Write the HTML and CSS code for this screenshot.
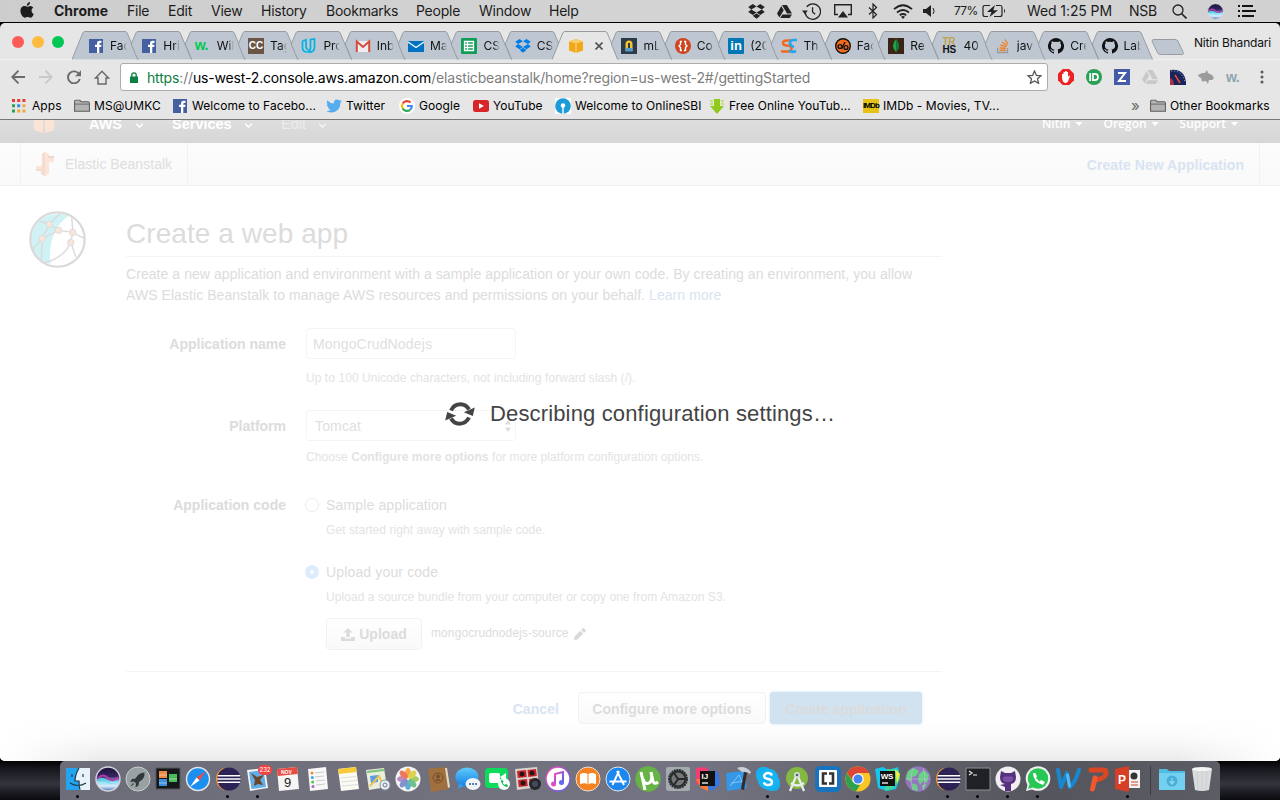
FILE: index.html
```html
<!DOCTYPE html>
<html lang="en">
<head>
<meta charset="utf-8">
<title>Elastic Beanstalk</title>
<link rel="stylesheet" href="styles.css">
</head>
<body>
<svg class="defs" aria-hidden="true">
  <defs>
    <symbol id="tab" viewBox="0 0 67 29"><path d="M12.7 28.5L6.3 13L11 1.8Q11.500.5 13 .5H53Q54.500.5 55.200 2L66.500 28.500Z" fill="#bec7d1"/><path d="M12.700 28.500L6.300 13L11 1.800Q11.500.5 13 .5H53Q54.500.5 55.200 2L66.500 28.500" fill="none" stroke="#979ca2"/></symbol>
    <symbol id="tab-full" viewBox="0 0 67 29"><path d="M0 28.500L10.800 2Q11.500.5 13 .5H53Q54.500.5 55.200 2L66.500 28.500Z" fill="#bec7d1"/><path d="M0 28.500L10.800 2Q11.500.5 13 .5H53Q54.500.5 55.200 2L66.500 28.500" fill="none" stroke="#979ca2"/></symbol>
    <symbol id="fb" viewBox="0 0 16 16"><path d="M1 1h14v14H1z" fill="#4460a0"/><path d="M9 15V9H7V6.800h2V5.200Q9 2.800 11.500 2.800h2V5h-1.300Q11.300 5 11.300 6v.8h2.200L13.200 9h-1.900v6z" fill="#fff"/></symbol>
    <symbol id="github" viewBox="0 0 16 16"><path fill="#111" d="M8 0a8 8 0 0 0-2.500 15.600c.4.1.5-.2.500-.4v-1.500c-2.200.5-2.700-1-2.700-1-.4-.9-.9-1.200-.9-1.200-.7-.5.100-.5.100-.5.800.100 1.200.8 1.200.8.700 1.200 1.900.9 2.300.7.100-.5.300-.9.500-1.100-1.800-.2-3.600-.9-3.600-4 0-.9.300-1.600.8-2.100-.1-.2-.4-1 .1-2.100 0 0 .7-.2 2.200.8a7.600 7.600 0 0 1 4 0c1.500-1 2.200-.8 2.200-.8.400 1.100.2 1.900.1 2.100.5.600.8 1.300.8 2.100 0 3.100-1.900 3.700-3.700 3.900.3.300.6.800.6 1.500v2.400c0 .2.100.5.500.4A8 8 0 0 0 8 0z"/></symbol>
    <symbol id="dropbox" viewBox="0 0 16 16"><path d="M4.500 1L.2 3.800 3 6.100 8 3.200zM11.500 1L8 3.200l5 2.900 2.800-2.300zM3 6.100L.2 8.500l4.300 2.800L8 8.900zM13 6.100L8 8.900l3.500 2.400 4.300-2.800zM4.500 12.100L8 9.800l3.500 2.300L8 14.800z"/></symbol>
    <symbol id="drive" viewBox="0 0 16 16"><path d="M5.300 1h5.200L16 10.200h-5.300zM4.600 2.200l2.600 4.500-4.600 7.700L0 10.200zM5.800 11.200H16L13.500 15H3.500z"/></symbol>
    <symbol id="folder" viewBox="0 0 17 14"><path d="M.6 12.500V2.200Q.6.700 2 .7h4l1.600 1.800h7.300q1.500 0 1.500 1.500v8.500z" fill="#b4b4b4" stroke="#5c5c5c" stroke-width="1.100"/><path d="M1 5h15" stroke="#666"/></symbol>
    <symbol id="chev" viewBox="0 0 10 6"><path d="M1 .8l4 4 4-4" fill="none" stroke="#fff" stroke-width="1.800"/></symbol>
    <symbol id="eclipse" viewBox="0 0 28 26"><circle cx="13" cy="13" r="12" fill="#f79432"/><circle cx="15" cy="13" r="12.500" fill="#2c2255"/><path d="M3 9.500h24M2.500 13h25M3 16.500h24" stroke="#fff" stroke-width="1.500"/></symbol>
    <linearGradient id="g-blue" x1="0" y1="0" x2="0" y2="1"><stop stop-color="#5fcbfa"/><stop offset="1" stop-color="#167fe6"/></linearGradient>
    <linearGradient id="g-note" x1="0" y1="0" x2="1" y2="1"><stop stop-color="#f64bb5"/><stop offset="1" stop-color="#4a5ff0"/></linearGradient>
    <linearGradient id="g-siri" x1="0" y1="0" x2="0" y2="1"><stop stop-color="#1a1238"/><stop offset=".4" stop-color="#3b2363"/><stop offset=".62" stop-color="#8fe3f5"/><stop offset=".8" stop-color="#dbe9fb"/><stop offset="1" stop-color="#3d6fb8"/></linearGradient>
    <symbol id="siri" viewBox="0 0 26 26"><circle cx="13" cy="13" r="12" fill="url(#g-siri)" stroke="#d5d5dd" stroke-width="1.400"/><path d="M2 14Q8 9 13 15T24 13Q20 20 13 17T2 14" fill="#5fdcf0" opacity=".8"/><path d="M3 12q5-5 10 0t10-1" stroke="#b03db0" stroke-width="2" fill="none"/></symbol>
  </defs>
</svg>

<header class="menubar">
  <nav class="menus">
    <svg class="apple" viewBox="0 0 14 16"><path d="M10 0q.1 1.600-.9 2.700T6.800 3.800q-.1-1.500.9-2.600T10 0zM7.300 4.700C8 4.700 8.900 3.900 10.300 3.900q1.900.1 3 1.600-1.900 1.200-1.800 3.200.1 2.300 2.200 3.200C13 13.900 11.800 15.700 10.300 15.700c-1 0-1.500-.6-2.700-.6s-1.700.6-2.700.6C3 15.700.4 12 .4 8.700.4 5.700 2.300 4 4.300 4c1.300 0 2.200.7 3 .7z" fill="#1d1d1d"/></svg>
    <b>Chrome</b><span>File</span><span>Edit</span><span>View</span><span>History</span><span>Bookmarks</span><span>People</span><span>Window</span><span>Help</span>
  </nav>
  <div class="status">
    <svg class="s-db" viewBox="0 0 16 16"><use href="#dropbox"/></svg>
    <svg class="s-dr" viewBox="0 0 16 16"><use href="#drive"/></svg>
    <svg class="s-tm" viewBox="0 0 18 16"><g fill="none" stroke="#222" stroke-width="1.200"><path d="M3 9a7.300 7.300 0 1 0 1.500-5.500M10 4v4.500l2.500 2"/></g><path d="M0 7h5.500L2.800 10.500z"/></svg>
    <svg class="s-ap" viewBox="0 0 18 14"><path d="M4 10.500H.7V.7h16.600v9.800H14" fill="none" stroke="#222" stroke-width="1.400"/><path d="M9 7l5 6.500H4z"/></svg>
    <svg class="s-bt" viewBox="0 0 10 16"><path d="M1 4.500l7.500 7L5 15V1l3.500 3.500-7.500 7" fill="none" stroke="#222" stroke-width="1.200"/></svg>
    <svg class="s-wf" viewBox="0 0 20 15"><g fill="none" stroke="#222" stroke-width="1.800"><path d="M1 5.200Q10-2.800 19 5.200M4 8.500q6-5 12 0M6.800 11.300q3.200-2.500 6.400 0"/></g><path d="M10 15l-2-2.200q2-1.600 4 0z"/></svg>
    <svg class="s-vo" viewBox="0 0 14 12"><path d="M0 4h3l5-4v12L3 8H0z"/><path d="M10 3q2.300 3 0 6" fill="none" stroke="#222"/></svg>
    <span class="pct">77%</span>
    <svg class="s-ba" viewBox="0 0 24 14"><path d="M8 1.500H3Q1 1.500 1 3.500v7q0 2 2 2h3M14 1.500h4.500q1.500 0 1.500 2v7q0 2-2 2h-6" fill="none" stroke="#222" stroke-width="1.200"/><path d="M13 1L5 8h4.500L7.500 13 16 6.200h-4.700zM22 4.800q2 2.200 0 4.400z"/></svg>
    <span class="clock">Wed 1:25 PM</span><span class="user">NSB</span>
    <svg class="s-se" viewBox="0 0 15 15"><circle cx="6" cy="6" r="5" fill="none" stroke="#222" stroke-width="1.300"/><path d="M9.500 9.500l5 5" stroke="#222" stroke-width="1.600"/></svg>
    <svg class="s-si" viewBox="0 0 26 26"><use href="#siri"/></svg>
    <svg class="s-li" viewBox="0 0 18 12"><path d="M0 1h2M0 6h2M0 11h2M4 1h11M4 6h14M4 11h12" stroke="#111" stroke-width="2"/></svg>
  </div>
</header>

<main class="window">
  <div class="tabstrip">
    <div class="lights"><i class="red"></i><i class="yellow"></i><i class="green"></i></div>
    <div class="tabs">
      <div class="tab"><svg class="shape"><use href="#tab-full"/></svg><svg class="fav" viewBox="0 0 16 16"><use href="#fb"/></svg><span>Fac</span></div>
      <div class="tab"><svg class="shape"><use href="#tab"/></svg><svg class="fav" viewBox="0 0 16 16"><use href="#fb"/></svg><span>Hri</span></div>
      <div class="tab"><svg class="shape"><use href="#tab"/></svg><b class="fav wfav">w.</b><span>Wil</span></div>
      <div class="tab"><svg class="shape"><use href="#tab"/></svg><b class="fav ccfav">CC</b><span>Tag</span></div>
      <div class="tab"><svg class="shape"><use href="#tab"/></svg><svg class="fav" viewBox="0 0 16 16"><path d="M1.500 3v6.500q0 4 4 4.500c3 0 4-2 4-4.500V1.500l4-.5v8q0 5-5.500 5.500M1.500 3L5 2v7q0 2 2.500 3" fill="none" stroke="#02b3e4" stroke-width="1.700"/></svg><span>Pro</span></div>
      <div class="tab"><svg class="shape"><use href="#tab"/></svg><svg class="fav" viewBox="0 0 16 16"><path d="M1 3h14v11H1z" fill="#eee"/><path d="M1.800 14V3.500L8 9l6.200-5.500V14" fill="none" stroke="#d54b3d" stroke-width="2"/></svg><span>Inb</span></div>
      <div class="tab"><svg class="shape"><use href="#tab"/></svg><svg class="fav" viewBox="0 0 16 16"><path d="M0 3h16v11H0z" fill="#0072c6"/><path d="M0 4l8 5.500L16 4" fill="none" stroke="#fff" stroke-width="1.300"/></svg><span>Ma</span></div>
      <div class="tab"><svg class="shape"><use href="#tab"/></svg><svg class="fav" viewBox="0 0 16 16"><rect width="16" height="16" rx="1" fill="#0f9d58"/><path d="M3.500 3.500h9v9h-9zM3.500 6.500h9M3.500 9.500h9M6.500 3.500v9" fill="none" stroke="#fff" stroke-width="1.300"/></svg><span>CS</span></div>
      <div class="tab"><svg class="shape"><use href="#tab"/></svg><svg class="fav blue" viewBox="0 0 16 16"><use href="#dropbox"/></svg><span>CS</span></div>
      <div class="tab active"><svg class="shape" viewBox="0 0 67 29"><path d="M0 29L10.800 2Q11.500.5 13 .5H53Q54.500.5 55.200 2L66.500 29z" fill="#e6e6e6"/><path d="M0 28.500L10.800 2Q11.500.5 13 .5H53Q54.500.5 55.200 2L66.500 28.500" fill="none" stroke="#979ca2"/></svg><svg class="fav" viewBox="0 0 16 16"><path d="M1 3.500L8 1l7 2.500v9L8 15l-7-2.500z" fill="#f0a91c"/><path d="M1 3.500L8 1l7 2.500L8 5.500z" fill="#f9cf6a"/><path d="M8 5.500V15" stroke="#fbd98c"/></svg><svg class="close" viewBox="0 0 8 8"><path d="M.5.5l7 7M7.500.5l-7 7" stroke="#555" stroke-width="1.700"/></svg></div>
      <div class="tab"><svg class="shape"><use href="#tab"/></svg><svg class="fav" viewBox="0 0 16 16"><path d="M0 0h16v16H0z" fill="#2d3a48"/><path d="M4.500 13V6q0-3.500 3.500-3.500T11.500 6v7z" fill="#f2c230"/><path d="M4.500 10h7v3.500h-7z" fill="#4f9bd0"/><path d="M8 5v5" stroke="#2d3a48" stroke-width="2"/></svg><span>mL</span></div>
      <div class="tab"><svg class="shape"><use href="#tab"/></svg><svg class="fav" viewBox="0 0 16 16"><circle cx="8" cy="8" r="8" fill="#cf4520"/><path d="M7 3.500H5.500v3L4 8l1.500 1.500v3H7M9 3.500h1.500v3L12 8l-1.500 1.500v3H9" fill="none" stroke="#fff" stroke-width="1.400"/></svg><span>Co</span></div>
      <div class="tab"><svg class="shape"><use href="#tab"/></svg><b class="fav infav">in</b><span>(20</span></div>
      <div class="tab"><svg class="shape"><use href="#tab"/></svg><svg class="fav" viewBox="0 0 16 16"><path d="M10 2.500H6Q2 2.500 2 5t4 2.500q4.500 0 4.500 3T7 13.500H0" fill="none" stroke="#f36a1d" stroke-width="2.600"/><path d="M16 2h-3.500Q9 2 9 5t4 4" fill="none" stroke="#20a7ee" stroke-width="2.600"/><path d="M8 12.500q3 2.500 7 .5" fill="none" stroke="#20a7ee" stroke-width="2.600"/></svg><span>Th</span></div>
      <div class="tab"><svg class="shape"><use href="#tab"/></svg><svg class="fav" viewBox="0 0 16 16"><circle cx="8" cy="8" r="7.300" fill="#f26a1b" stroke="#111" stroke-width="1.400"/><circle cx="5" cy="8.500" r="1.900" fill="none" stroke="#111" stroke-width="1.400"/><circle cx="11" cy="9.500" r="1.900" fill="none" stroke="#111" stroke-width="1.400"/><path d="M6.500 11l3.500-7" stroke="#111" fill="none" stroke-width="1.400"/></svg><span>Fac</span></div>
      <div class="tab"><svg class="shape"><use href="#tab"/></svg><svg class="fav" viewBox="0 0 16 16"><path d="M0 0h16v16H0z" fill="#3b2415"/><path d="M8 1q6 7 0 13-6-6 0-13" fill="#21a244"/><path d="M8 1q6 7 0 13z" fill="#117a36"/></svg><span>Re</span></div>
      <div class="tab"><svg class="shape"><use href="#tab"/></svg><b class="fav trfav"><i>TR</i>HS</b><span>40</span></div>
      <div class="tab"><svg class="shape"><use href="#tab"/></svg><svg class="fav" viewBox="0 0 16 16"><path d="M2.500 10v4.500h10V10" fill="none" stroke="#999" stroke-width="1.300"/><path d="M4.500 12.300h6.200M4.600 9.800l6.200.7M5.400 7l5.800 1.800M7.200 4.200l4.800 3.500M10 1.500l3 5" stroke="#f48024" stroke-width="1.400"/></svg><span>jav</span></div>
      <div class="tab"><svg class="shape"><use href="#tab"/></svg><svg class="fav" viewBox="0 0 16 16"><use href="#github"/></svg><span>Cre</span></div>
      <div class="tab"><svg class="shape"><use href="#tab"/></svg><svg class="fav" viewBox="0 0 16 16"><use href="#github"/></svg><span>Lab</span></div>
    </div>
    <svg class="newtab" viewBox="0 0 34 16"><path d="M3 .5h21q2 0 2.800 1.500l5.500 11.500q.7 2-1 2H9.500q-2 0-2.800-1.500L1.200 2.500Q.500.5 3 .5z" fill="#bec7d1" stroke="#979ca2"/></svg>
    <span class="profile">Nitin Bhandari</span>
  </div>

  <div class="toolbar">
    <svg class="t-back" viewBox="0 0 14 14"><path d="M14 7H1M7.500.7L1.200 7l6.300 6.300" fill="none" stroke="#6b6b6b" stroke-width="1.800"/></svg>
    <svg class="t-fwd" viewBox="0 0 14 14"><path d="M0 7h13M6.500.7L12.800 7l-6.300 6.300" fill="none" stroke="#c9c9c9" stroke-width="1.800"/></svg>
    <svg class="t-rel" viewBox="0 0 14 14"><path d="M12.300 4.500A6 6 0 1 0 12.800 9" fill="none" stroke="#6b6b6b" stroke-width="1.900"/><path d="M14 .3v6H8z" fill="#6b6b6b"/></svg>
    <svg class="t-home" viewBox="0 0 16 15"><path d="M1.500 8L8 1.300 14.500 8H12v6H4V8z" fill="none" stroke="#6b6b6b" stroke-width="1.500"/></svg>
    <div class="omnibox">
      <svg class="lock" viewBox="0 0 8 11"><path d="M0 4.500h8V11H0z" fill="#0b8043"/><path d="M1.800 5V3q0-2.200 2.200-2.200T6.200 3v2" fill="none" stroke="#0b8043" stroke-width="1.300"/></svg>
      <div class="url"><span class="secure">https</span><span class="dim">://</span>us-west-2.console.aws.amazon.com<span class="dim path">/elasticbeanstalk/home?region=us-west-2#/gettingStarted</span></div>
      <svg class="star" viewBox="0 0 15 14"><path d="M7.500 1l1.900 4.400 4.600.4-3.500 3 1.100 4.500-4.100-2.400-4.100 2.400 1.100-4.500L1 5.800l4.600-.4z" fill="none" stroke="#555" stroke-width="1.300"/></svg>
    </div>
    <div class="exts">
      <svg viewBox="0 0 16 16"><path d="M4.700 0h6.600L16 4.700v6.600L11.300 16H4.700L0 11.300V4.700z" fill="#ed2224"/><path d="M4 8V5h1.500v2V3H7v4V2h1.500v5V3H10v5l1-1.500 1 .5-1.800 5Q9.500 14 7.500 14 4 13.500 4 8z" fill="#fff"/></svg>
      <svg viewBox="0 0 16 16"><circle cx="8" cy="8" r="8" fill="#2a9f56"/><path d="M4.200 4v8" stroke="#fff" stroke-width="1.800"/><path d="M7 4.800v6.400h1.800q3.200 0 3.200-3.200T8.800 4.800z" fill="none" stroke="#fff" stroke-width="1.700"/></svg>
      <svg viewBox="0 0 16 16"><path d="M0 0h16v16H0z" fill="#465ba7"/><path d="M4 4h7L5 12h7" fill="none" stroke="#fff" stroke-width="2"/></svg>
      <svg viewBox="0 0 16 16" fill="#c9c9c9"><use href="#drive"/></svg>
      <svg viewBox="0 0 16 16"><path d="M0 1Q14-1 16 13v3H0z" fill="#18245c"/><path d="M1 2Q13 1 15 14" fill="none" stroke="#b9c0d8" stroke-dasharray="1 2"/><path d="M10 14L5 6" stroke="#f14a38" stroke-width="1.500"/><path d="M0 9q4 1 4 7H0z" fill="#a83048"/></svg>
      <svg viewBox="0 0 16 16"><path d="M0 6l4-2 3 0 2-3 1 3 4 2 2 3-2 2h-3l-1 4-2-3-4 .5L3 9 1 8z" fill="#9b9b9b"/></svg>
      <b>w.</b>
      <svg class="dots" viewBox="0 0 4 14"><circle cx="2" cy="2" r="1.500"/><circle cx="2" cy="7" r="1.500"/><circle cx="2" cy="12" r="1.500"/></svg>
    </div>
  </div>

  <div class="bookmarks">
    <a><svg viewBox="0 0 14 14"><path d="M0 0h3v3H0zM5.200 0h3v3h-3zM10.400 0h3v3h-3z" fill="#e93a36"/><path d="M0 5.200h3v3H0z" fill="#2ba24c"/><path d="M5.200 5.200h3v3h-3z" fill="#3389e8"/><path d="M10.400 5.200h3v3h-3zM5.200 10.400h3v3h-3zM10.400 10.400h3v3h-3z" fill="#f2a63a"/><path d="M0 10.400h3v3H0z" fill="#2ba24c"/></svg>Apps</a>
    <a><svg viewBox="0 0 17 14"><use href="#folder"/></svg>MS@UMKC</a>
    <a><svg viewBox="0 0 16 16"><use href="#fb"/></svg>Welcome to Facebo...</a>
    <a><svg viewBox="0 0 16 14"><path d="M0 12q3 .3 4.800-1.300Q2.500 10.500 1.800 8.500h1.300Q.7 7.600.6 5.200l1.500.4Q0 3.800 1.200 1.300 4 4.500 7.900 4.600 7.500.8 11 .5q1.400 0 2.400 1L15.500.7 14.200 2.500 16 2l-1.600 1.700Q14.300 10 9.500 12.500 4.500 14.700 0 12z" fill="#55acee"/></svg>Twitter</a>
    <a><svg viewBox="0 0 16 16"><circle cx="8" cy="8" r="8" fill="#fff"/><g fill="none" stroke-width="2.200"><path d="M11.500 4.500A5 5 0 0 0 3.700 5.500" stroke="#ea4335"/><path d="M3.700 5.500a5 5 0 0 0 0 5" stroke="#fbbc05"/><path d="M3.700 10.500a5 5 0 0 0 7.500 1.300" stroke="#34a853"/><path d="M11.200 11.800Q13 10 12.800 8H8" stroke="#4285f4"/></g></svg>Google</a>
    <a><svg viewBox="0 0 16 12"><rect width="16" height="12" rx="2.500" fill="#d9252a"/><path d="M6 3.300v5.400L11 6z" fill="#fff"/></svg>YouTube</a>
    <a><svg viewBox="0 0 16 16"><path d="M0 0h16v16H0z" fill="#fff"/><circle cx="8" cy="8" r="7.800" fill="#1b9bd7"/><circle cx="8" cy="7.500" r="2.300" fill="#fff"/><path d="M7.300 8h1.400v8H7.300z" fill="#fff"/></svg>Welcome to OnlineSBI</a>
    <a><svg viewBox="0 0 14 16"><path d="M4 1h6v7h4l-7 8-7-8h4z" fill="#8fca1c"/><path d="M0 3h14M0 6h14" stroke="#b5e34b" stroke-width="1.300" stroke-dasharray="3 8"/></svg>Free Online YouTub...</a>
    <a><i class="imdb">IMDb</i>IMDb - Movies, TV...</a>
    <span class="more">»</span>
    <a><svg viewBox="0 0 17 14"><use href="#folder"/></svg>Other Bookmarks</a>
  </div>

  <div class="page">
    <div class="awsbar">
      <svg class="cube" viewBox="0 0 20 13"><path d="M0 0h9v13L0 10zM11 0h9v10l-9 3z" fill="#fbe4d3"/></svg>
      <b class="n-aws">AWS</b><svg class="c"><use href="#chev"/></svg>
      <b class="n-ser">Services</b><svg class="c"><use href="#chev"/></svg>
      <b class="n-edit">Edit</b><svg class="c c-edit"><use href="#chev"/></svg>
      <div class="account"><b>Nitin</b><i></i><b>Oregon</b><i></i><b>Support</b><i></i></div>
    </div>
    <div class="servicebar">
      <div class="service"><svg viewBox="0 0 18 24"><path d="M6 2l3-2 4 2v20l-4 2-4-2v-3H0v-5h6z" fill="#fbe5da"/><path d="M13 5h5v5h-5z" fill="#fbe5da"/><path d="M9 0v24l-4-2v-3H0v-2h6V2z" fill="#f5dccf"/><path d="M12 4h6v2h-6z" fill="#eed7cc"/></svg><span>Elastic Beanstalk</span></div>
      <b class="create-new">Create New Application</b>
    </div>
    <div class="content">
      <svg class="globe" viewBox="0 0 56 56"><circle cx="28" cy="28" r="27" fill="#fff"/><path d="M40 4Q18 19 21 52 1 47 2 27 7-2 40 4z" fill="#d0f2f4"/><g fill="none" stroke="#dadada" stroke-width="1.400"><circle cx="28" cy="28" r="26.700" stroke-width="2.200"/><path d="M10 10l10 3 9 6 14 2 11 6M29 19l-16 8-10 11M20 13l-7 14-1 22M20 13L31 2M42 5l1 16-2 10-4 7Q28 48 15 51M43 21l-2 10 5 14"/></g><g fill="#fbe5da" stroke="#ddd"><circle cx="20" cy="13" r="3"/><circle cx="29" cy="19" r="3"/><circle cx="13" cy="27" r="3"/><circle cx="43" cy="21" r="3"/><circle cx="41" cy="31" r="3"/></g></svg>
      <section class="form">
        <h1>Create a web app</h1>
        <p class="intro">Create a new application and environment with a sample application or your own code. By creating an environment, you allow<br>AWS Elastic Beanstalk to manage AWS resources and permissions on your behalf. <a>Learn more</a></p>
        <div class="row name"><label>Application name</label><div class="field"><div class="input">MongoCrudNodejs</div><p class="hint">Up to 100 Unicode characters, not including forward slash (/).</p></div></div>
        <div class="row platform"><label>Platform</label><div class="field"><div class="input select">Tomcat<svg viewBox="0 0 6 12"><path d="M3 0l3 4.500H0zM0 7.500h6L3 12z" fill="#ddd"/></svg></div><p class="hint">Choose <b>Configure more options</b> for more platform configuration options.</p></div></div>
        <div class="row code"><label>Application code</label><div class="field">
          <div class="option"><i class="radio"></i><span>Sample application</span></div>
          <p class="hint sub">Get started right away with sample code.</p>
          <div class="option second"><i class="radio on"></i><span>Upload your code</span></div>
          <p class="hint sub">Upload a source bundle from your computer or copy one from Amazon S3.</p>
          <div class="upload"><div class="btn"><svg viewBox="0 0 14 13"><path d="M7 0l4.500 4.500H8.700V9H5.300V4.500H2.500zM0 9h4v1.500h6V9h4v4H0z" fill="#dcdcdc"/></svg>Upload</div><span>mongocrudnodejs-source</span><svg class="pencil" viewBox="0 0 12 12"><path d="M8.500.5Q9.500-.3 10.300.5l1.200 1.200q.8.800 0 1.800L10 5 7 2zM6.200 2.800l3 3L3.500 11.500 0 12l.5-3.500z" fill="#dadada"/></svg></div>
        </div></div>
        <div class="actions"><a>Cancel</a><div class="btn conf">Configure more options</div><div class="btn primary">Create application</div></div>
      </section>
    </div>
    <div class="loading"><svg viewBox="0 0 30 24"><g fill="none" stroke="#444" stroke-width="4"><path d="M6 8.500Q9 2.300 15.500 2.300 21 2.300 24 7.500M24 15.500Q21 21.700 14.500 21.700 9 21.700 6 16.500"/></g><path d="M29.800 5.500l-2 8.500-9-3.800zM.2 18.500l2-8.500 9 3.800z" fill="#444"/></svg><span>Describing configuration settings…</span></div>
  </div>
</main>

<footer class="dock">
  <div class="app"><svg viewBox="0 0 26 26"><path d="M1 2h24v22H1z" fill="#e8f2fa"/><path d="M1 2h13Q10 9 10 15h4v9H1z" fill="#22a5f1"/><path d="M14 2Q10 9 10 15h4q0 5 1 9M5 17q8 5 16 0M7 8v3M18 8v3" fill="none" stroke="#23364c" stroke-width="1.200"/></svg><i></i></div>
  <div class="app"><svg viewBox="0 0 26 26"><use href="#siri"/></svg></div>
  <div class="app"><svg viewBox="0 0 26 26"><circle cx="13" cy="13" r="12" fill="#99a1a3" stroke="#c9ced0"/><path d="M19.500 6.500q-6 0-9 6L7 13l-2 3 4-.5 2 2-.5 4 3-2 .5-3.500q6-3 5.500-9.500zM8 17l-3 4 4-3z" fill="#33383c"/></svg></div>
  <div class="app"><svg viewBox="0 0 26 26"><path d="M1 2h24v21H1z" fill="#15181a" stroke="#555"/><path d="M4 5h8v7H4z" fill="#ec8b48"/><path d="M14 8h8v8h-8z" fill="#48bb5a"/><path d="M4 13h8v7H4z" fill="#3d91dc"/><path d="M4 9h8M14 13h8M4 17h8" stroke="#ffffff77"/></svg></div>
  <div class="app"><svg viewBox="0 0 26 26"><circle cx="13" cy="13" r="11.500" fill="#1b8ff0" stroke="#e1e4e8" stroke-width="1.500"/><path d="M21 5l-6.500 9.500-3-3z" fill="#f14a40"/><path d="M5 21l6.500-9.500 3 3z" fill="#fff"/></svg></div>
  <div class="app"><svg viewBox="0 0 28 26"><use href="#eclipse"/></svg><i></i></div>
  <div class="app"><svg viewBox="0 0 26 26"><path d="M2 4l18-2 3 20-18 3z" fill="#f2f4f5"/><path d="M4 6l14.500-2 2.500 17-14.500 2z" fill="#61aee6"/><path d="M6 7l6 4 7-2-4 5 3 5-5-1-4 2 1-6z" fill="#6b4528"/></svg><em>232</em><i></i></div>
  <div class="app"><svg viewBox="0 0 26 26"><path d="M2 3l20-2 2 22-20 2z" fill="#f6f6f6"/><path d="M2 3l20-2 .6 7L2.600 10z" fill="#e74b42"/><text class="cal" x="9" y="21">9</text><text class="mon" x="6" y="7.500">NOV</text></svg></div>
  <div class="app"><svg viewBox="0 0 26 26"><path d="M3 3l18-2 2 22-18 2z" fill="#f8f8f8"/><path d="M10 7l9-1M10 11l9-1M11 15l9-1M11 19l9-1" stroke="#ccc"/><circle cx="7" cy="7" r="1.500" fill="#f08a2e"/><circle cx="7.300" cy="11.500" r="1.500" fill="#31a9e9"/><circle cx="7.600" cy="16" r="1.500" fill="#58c24a"/><circle cx="8" cy="20.500" r="1.500" fill="#b15ed4"/></svg></div>
  <div class="app"><svg viewBox="0 0 26 26"><path d="M3 3l18-2 3 22-18 2z" fill="#fbfaf3"/><path d="M3 3l18-2 .7 5L3.700 8z" fill="#f9ca3a"/><path d="M6 12l15-1.500M6 16l16-1.500M7 20l16-1.500" stroke="#ddd"/></svg></div>
  <div class="app"><svg viewBox="0 0 26 26"><path d="M1 4l18-2 3 19-18 3z" fill="#e9eedd"/><path d="M2 6l17-2" stroke="#7ac378" stroke-width="2" fill="none"/><path d="M5 10l8-1v7l-7 1z" fill="#5e9be4"/><path d="M5 20l9-10 4 9" fill="none" stroke="#e9c64b" stroke-width="2"/><circle cx="20" cy="19" r="5" fill="#eceff2" stroke="#8c96a2"/><circle cx="20" cy="19" r="2" fill="none" stroke="#68788b"/></svg></div>
  <div class="app"><svg viewBox="0 0 26 26"><circle cx="13" cy="13" r="12.500" fill="#f4f4f4"/><g opacity=".88"><ellipse cx="13" cy="7" rx="3" ry="5" fill="#f6a02e"/><ellipse cx="13" cy="19" rx="3" ry="5" fill="#48a5cf"/><ellipse cx="7" cy="13" rx="5" ry="3" fill="#b37bc0"/><ellipse cx="19" cy="13" rx="5" ry="3" fill="#96c94a"/><g transform="rotate(45 13 13)"><ellipse cx="13" cy="7" rx="3" ry="5" fill="#dccd38"/><ellipse cx="13" cy="19" rx="3" ry="5" fill="#7383c7"/><ellipse cx="7" cy="13" rx="5" ry="3" fill="#ef654b"/><ellipse cx="19" cy="13" rx="5" ry="3" fill="#5bb984"/></g></g></svg></div>
  <div class="app"><svg viewBox="0 0 26 26"><path d="M3 3l17-2 3 22-17 3z" fill="#a0703f"/><path d="M20 2l2 0 3 19-2 1z" fill="#e8dcc4"/><circle cx="13" cy="12" r="5" fill="none" stroke="#77502a"/><circle cx="13" cy="10.500" r="2" fill="#77502a"/><path d="M9.500 15q3.500-4 7 0z" fill="#77502a"/></svg></div>
  <div class="app"><svg viewBox="0 0 26 26"><ellipse cx="12" cy="11" rx="11.500" ry="9.500" fill="url(#g-blue)"/><path d="M4 17l-1 6 6-3z" fill="#2d9df0"/><ellipse cx="18" cy="18" rx="7.500" ry="6" fill="#f1f4f7"/><g fill="#36659b"><circle cx="15" cy="18" r="1.100"/><circle cx="18" cy="18" r="1.100"/><circle cx="21" cy="18" r="1.100"/></g></svg></div>
  <div class="app"><svg viewBox="0 0 26 26"><rect x="0" y="2" width="23" height="20" rx="4" fill="#0bdc5b"/><rect x="4" y="7" width="11" height="10" rx="2" fill="#fff"/><path d="M15 11l6-4v10z" fill="#fff"/><circle cx="19" cy="18" r="6" fill="#f4fff7"/><path d="M16 15q1 5 6 6l1-1.500-2-1.500-1.500 1-2-2 1-1.500-1.500-2z" fill="#12b64c"/></svg></div>
  <div class="app"><svg viewBox="0 0 26 26"><path d="M0 3l22-2 2 20-22 3z" fill="#d9d2cf"/><g fill="#c9232c"><path d="M2 5l9-1 .8 7-9 1zM12.500 4l8.500-1 .8 7-8.500 1zM3 14l9-1 .8 7-9 1zM14 13l8-1 .8 7-8 1z"/></g><g fill="#281614"><circle cx="7" cy="8" r="2.500"/><circle cx="17" cy="7" r="2.500"/><circle cx="8" cy="17" r="2.500"/></g><circle cx="20" cy="18" r="6" fill="#25272c"/><circle cx="20" cy="18" r="3" fill="#454b5c"/></svg></div>
  <div class="app"><svg viewBox="0 0 26 26"><circle cx="13" cy="13" r="12" fill="#fff" stroke="url(#g-note)" stroke-width="1.400"/><path d="M10 18V8l8-2v10" fill="none" stroke="url(#g-note)" stroke-width="2"/><circle cx="8.500" cy="18" r="2.500" fill="#db50c5"/><circle cx="16.500" cy="16.500" r="2.500" fill="#6567ed"/></svg></div>
  <div class="app"><svg viewBox="0 0 26 26"><circle cx="13" cy="13" r="12" fill="#f5821f" stroke="#eadfd8"/><path d="M5 8q5-2 8 .5Q16 6 21 8v10q-5-1.500-8 .5Q10 16.500 5 18z" fill="#fff"/><path d="M13 8.500v10" stroke="#f5821f"/></svg></div>
  <div class="app"><svg viewBox="0 0 26 26"><circle cx="13" cy="13" r="12" fill="#1c87ee" stroke="#e4e9ef"/><path d="M14 5L7.500 19M12 5l7 14M4.500 15.500h17" stroke="#fff" stroke-width="1.900" fill="none"/></svg></div>
  <div class="app"><svg viewBox="0 0 26 26"><circle cx="13" cy="13" r="12.700" fill="#66b446"/><path d="M6 6l4 18M8 13q2 6 6 4t2-11l2 9q1 4 5 1" fill="none" stroke="#fff" stroke-width="3"/></svg></div>
  <div class="app"><svg viewBox="0 0 26 26"><rect x="1" y="1" width="24" height="24" rx="2" fill="#a3abaf"/><circle cx="13" cy="13" r="9" fill="#777" stroke="#2b2e30" stroke-width="2" stroke-dasharray="2 .7"/><circle cx="13" cy="13" r="7.500" fill="none" stroke="#2b2e30" stroke-width="2"/><path d="M13 13h7M13 13l-4-6M13 13l-4 6" stroke="#26282a" stroke-width="2"/></svg></div>
  <div class="app"><svg viewBox="0 0 26 26"><path d="M1 2l9-1 6 5-9 10-6 3z" fill="#f93b73"/><path d="M14 4l9 2 2 12-8 7-6-5z" fill="#3476e4"/><path d="M1 13l5 9 7 3V13z" fill="#f37b3b"/><path d="M5 5h15v15H5z" fill="#111"/><text class="code-t" x="6.500" y="13">IJ</text><path d="M7 17h6" stroke="#fff" stroke-width="1.300"/></svg></div>
  <div class="app"><svg viewBox="0 0 26 26"><path d="M1 7l18-2 3 17-20 3z" fill="#3497e8"/><path d="M5 20L14 9l5 11M6 17l14-2" fill="none" stroke="#84c7f7"/><path d="M19 6l3 1-3 17-3-1z" fill="#342a26"/><path d="M12 2q8-3 14 4l-1 2q-3-3-8-2z" fill="#cbd0d4"/></svg></div>
  <div class="app"><svg viewBox="0 0 26 26"><rect x="1" y="1" width="15" height="15" rx="6" fill="#13b0ef"/><rect x="10" y="10" width="15" height="15" rx="6" fill="#13b0ef"/><circle cx="13" cy="13" r="10.500" fill="#16b4f1"/><path d="M17 9.500Q16 7 13 7T9 9.800q0 2.700 4 3.200t4 3.200q0 2.800-4 2.800-3.300 0-4.200-2.700" fill="none" stroke="#fff" stroke-width="2.300"/></svg><i></i></div>
  <div class="app"><svg viewBox="0 0 26 26"><circle cx="12" cy="12" r="11" fill="#83b940"/><path d="M12 8L5 25M12 8l7 17M6 17q6 5 13 0" fill="none" stroke="#e9ecef" stroke-width="2.300"/><circle cx="12" cy="9" r="3" fill="#d6dcde"/><circle cx="12" cy="9" r="1.300" fill="#526168"/></svg></div>
  <div class="app"><svg viewBox="0 0 26 26"><rect x="0" y="0" width="26" height="26" rx="5" fill="#1874be"/><rect x="4" y="4" width="18" height="17" rx="1" fill="#fff"/><path d="M12 7.500H8v10h4M14 7.500h4v10h-4" fill="none" stroke="#333" stroke-width="2.600"/></svg></div>
  <div class="app"><svg viewBox="0 0 26 26"><circle cx="13" cy="13" r="12.500" fill="#fbc624"/><path d="M2.200 7A12.500 12.500 0 0 1 24 7H13L8 15z" fill="#df4535"/><path d="M2.200 7L8 16l7 3-4 6.300A12.500 12.500 0 0 1 2.200 7z" fill="#2da24c"/><circle cx="13" cy="13" r="5.800" fill="#fff"/><circle cx="13" cy="13" r="4.500" fill="#4285f4"/></svg><i></i></div>
  <div class="app"><svg viewBox="0 0 26 26"><path d="M0 3l8-2 5 3 10-3 2 10-4 12-9 2-9-3z" fill="#16c7e8"/><path d="M12 3l11 1 2 9-7 9-8 3z" fill="#47d68e"/><path d="M20 3l5 5-3 10z" fill="#e8ed47"/><path d="M5 5h15v15H5z" fill="#111"/><text class="ws-t" x="5.800" y="13">WS</text><path d="M7 17h6" stroke="#fff" stroke-width="1.300"/></svg><i></i></div>
  <div class="app"><svg viewBox="0 0 26 26"><circle cx="13" cy="13" r="12.700" fill="#9476bd"/><path d="M3 5l6-3 5 3-3 5-4 1-1 5-5-3zM14 8l5-4 5 5-2 8-4-2-3 4-2-5zM7 17l5 2 1 6-5-1zM17 19l5-1-4 6z" fill="#66d382"/><path d="M8 2q-4 11 0 22M18 2q4 11 0 22M1 13h24" fill="none" stroke="#cfb7dd" stroke-width=".6"/></svg></div>
  <div class="app"><svg viewBox="0 0 28 26"><use href="#eclipse"/></svg><i></i></div>
  <div class="app"><svg viewBox="0 0 26 26"><path d="M1 2h24v22H1z" fill="#1f2224" stroke="#8c8f92"/><path d="M4 5l3 2-3 2M8 9h4" fill="none" stroke="#eee" stroke-width="1.200"/></svg><i></i></div>
  <div class="app"><svg viewBox="0 0 26 26"><circle cx="13" cy="13" r="12.500" fill="#f0eef3"/><path d="M6 5l4 2h6l4-2 1 6q0 6-5 7v7h-6v-4l-5-2 5-1q-5-1-5-7z" fill="#57317e"/><path d="M8 11q5-1.500 10 0 1 4-3 5h-4q-4-1-3-5z" fill="#7a50a0"/></svg><i></i></div>
  <div class="app"><svg viewBox="0 0 26 26"><circle cx="13" cy="12.500" r="12.300" fill="#eef1ee"/><path d="M1 25l2-8 6 6z" fill="#eef1ee"/><circle cx="13" cy="12.500" r="10.200" fill="#27c754"/><path d="M3 23l2-6 4 4z" fill="#27c754"/><path d="M8 7q0 9 10 12l2-3-4-2-1.500 1.500L11 12l1-1.500L10.500 7z" fill="#fff"/></svg><i></i></div>
  <div class="app"><svg viewBox="0 0 26 26"><path d="M3 4l3 17 6-14 3 14Q20 17 24 4" fill="none" stroke="#1787cf" stroke-width="4" stroke-linejoin="round" stroke-linecap="round"/><path d="M12.500 9l2 11" stroke="#56baf0" stroke-width="3" stroke-linecap="round"/></svg></div>
  <div class="app"><svg viewBox="0 0 26 26"><path d="M6 4h12q4 0 3 4t-10 6" fill="none" stroke="#d94723" stroke-width="5" stroke-linejoin="round" stroke-linecap="round"/><path d="M10 12L7.500 23" stroke="#f0582e" stroke-width="5" stroke-linecap="round"/></svg></div>
  <div class="app"><svg viewBox="0 0 26 26"><path d="M12 4h13v18H12z" fill="#f2f2f2"/><circle cx="19" cy="10" r="3.500" fill="#333"/><path d="M16 16h7M16 19h7" stroke="#d24726"/><path d="M0 3l14-3v26L0 23z" fill="#d63e25"/><text class="pp-t" x="3" y="17.500">P</text></svg><i></i></div>
  <div class="divider"></div>
  <div class="app"><svg viewBox="0 0 26 26"><path d="M0 3h8l2 2h16v19H0z" fill="#50bbe3"/><path d="M0 7h26v17H0z" fill="#73d0f0"/><circle cx="13" cy="15" r="5.500" fill="#47aed6"/><path d="M13 12v5M10.500 15l2.500 3 2.500-3" stroke="#8fd9f3" fill="none" stroke-width="1.200"/></svg></div>
  <div class="app"><svg viewBox="0 0 26 26"><path d="M3 3h20l-3 21q-7 2-14 0z" fill="#d9dbdd"/><path d="M8 5l1 19M13 5v19M18 5l-1 19" stroke="#cdd0d2"/><ellipse cx="13" cy="3" rx="10" ry="2" fill="#f4f4f4"/></svg></div>
</footer>
</body>
</html>
```
FILE: styles.css
```css
* { box-sizing: border-box; }
body { margin: 0; width: 1280px; height: 800px; overflow: hidden; display: flex; flex-direction: column; font-family: Inter, Roboto, "Liberation Sans", sans-serif; color: #111; background: linear-gradient(#000 95%, #15161b 96%, #34353d 98%, #1c1d23 99%, #0b0b0e); }
svg { display: block; flex: none; }
.defs { position: absolute; width: 0; height: 0; }
b, i, em { font-style: normal; }

/* System menu bar */
.menubar { height: 23px; flex: none; background: linear-gradient(90deg, #cdcdcd, #d6d6d6 70%, #d1d1d1); border-bottom: 1px solid #000; display: flex; justify-content: space-between; font-size: 14px; line-height: 22px; color: #1c1c1c; }
.menus { display: flex; padding-left: 20px; white-space: nowrap; letter-spacing: -.25px; }
.apple { width: 14px; height: 16px; margin: 2px 20px 0 0; }
.menus b { width: 73px; letter-spacing: 0; }
.menus span:nth-of-type(1) { width: 41px; }
.menus span:nth-of-type(2) { width: 43px; }
.menus span:nth-of-type(3) { width: 50px; }
.menus span:nth-of-type(4) { width: 65px; }
.menus span:nth-of-type(5) { width: 90px; }
.menus span:nth-of-type(6) { width: 63px; }
.menus span:nth-of-type(7) { width: 70px; }
.status { display: flex; align-items: center; width: 532px; white-space: nowrap; fill: #222; }
.s-db { width: 17px; height: 17px; margin-right: 12px; }
.s-dr { width: 15px; height: 15px; margin-right: 10px; }
.s-tm { width: 19px; height: 17px; margin-right: 13px; }
.s-ap { width: 18px; height: 14px; margin-right: 16px; }
.s-bt { width: 10px; height: 16px; margin-right: 15px; }
.s-wf { width: 20px; height: 15px; margin-right: 10px; }
.s-vo { width: 14px; height: 12px; margin-right: 17px; }
.pct { width: 28px; font-size: 12px; letter-spacing: -.7px; }
.s-ba { width: 24px; height: 14px; margin-right: 20px; }
.clock { width: 102px; letter-spacing: -.1px; margin-left: 1px; }
.user { width: 43px; letter-spacing: -.3px; }
.s-se { width: 15px; height: 15px; margin-right: 20px; }
.s-si { width: 17px; height: 17px; margin-right: 14px; }
.s-li { width: 18px; height: 12px; }

/* Browser window */
.window { height: 738px; flex: none; background: #e6e6e6; border-radius: 5px; overflow: hidden; display: flex; flex-direction: column; }
.tabstrip { height: 37px; flex: none; display: flex; padding-top: 8px; border-bottom: 1px solid #f1f1f1; }
.lights { display: flex; flex: none; gap: 8px; padding: 5px 0 0 12px; width: 72px; }
.lights i { width: 12px; height: 12px; border-radius: 50%; }
.red { background: #fc5b57; }
.yellow { background: #fdbc40; }
.green { background: #00c853; }
.tabs { display: flex; flex: none; width: 1079px; }
.tab { position: relative; flex: none; width: 53.35px; height: 29px; padding: 7px 0 0 16px; display: flex; font-size: 12px; line-height: 16px; }
.shape { position: absolute; left: 0; top: 0; width: 67px; height: 29px; }
.fav { position: relative; width: 16px; height: 16px; flex: none; margin-right: 6px; }
.tab span { position: relative; width: 17px; flex: none; -webkit-mask-image: linear-gradient(90deg, #000 65%, transparent); mask-image: linear-gradient(90deg, #000 65%, transparent); }
.blue { fill: #007ee5; }
.close { position: relative; width: 8px; height: 8px; margin: 4px 0 0 5px; flex: none; }
.wfav { color: #00c853; font: 900 14px/14px "Liberation Sans", sans-serif; letter-spacing: -.5px; }
.ccfav { background: #6a5546; color: #fff; font: bold 10px/16px "Liberation Sans", sans-serif; text-align: center; }
.infav { background: #0077b5; color: #fff; font: bold 13px/16px "Liberation Sans", sans-serif; text-align: center; border-radius: 1px; }
.trfav { font: bold 10px/8px "Liberation Sans", sans-serif; letter-spacing: -.3px; padding-left: 1px; }
.trfav i { display: block; color: #c0a256; }
.newtab { width: 34px; height: 16px; margin: 8px 9px 0 0; }
.profile { font-size: 12px; line-height: 16px; margin-top: 4px; white-space: nowrap; letter-spacing: -.2px; }

.toolbar { height: 36px; flex: none; display: flex; align-items: center; padding: 0 15px 2px 11px; }
.t-back, .t-fwd, .t-rel { width: 14px; height: 14px; margin-right: 14px; }
.t-home { width: 16px; height: 15px; margin: 0 10px 0 -1px; }
.omnibox { width: 928px; height: 28px; border: 1px solid #acacac; border-radius: 3px; background: #fff; display: flex; align-items: center; padding: 0 5px 0 9px; }
.lock { width: 8px; height: 11px; margin-right: 9px; }
.url { flex: 1; white-space: nowrap; font-size: 14px; letter-spacing: -.16px; color: #000; }
.secure { color: #0b8043; }
.dim { color: #7d7d7d; }
.star { width: 15px; height: 14px; }
.exts { display: flex; align-items: center; margin-left: 10px; gap: 12px; }
.exts svg { width: 16px; height: 16px; }
.exts b { width: 16px; font: bold 14px/16px "Liberation Sans", sans-serif; color: #90a4ae; letter-spacing: -.5px; }
.exts .dots { width: 4px; height: 14px; margin-left: 6px; fill: #5a5a5a; }

.bookmarks { height: 24px; flex: none; display: flex; align-items: center; padding: 0 9px 4px 12px; font-size: 12px; line-height: 16px; letter-spacing: .06px; color: #000; border-bottom: 1px solid #777; white-space: nowrap; }
.bookmarks a { display: flex; align-items: center; gap: 4px; flex: none; }
.bookmarks svg { width: 16px; height: 16px; }
.bookmarks a:nth-child(1) { width: 62px; gap: 6px; }
.bookmarks a:nth-child(1) svg { width: 14px; }
.bookmarks a:nth-child(2) { width: 98px; }
.bookmarks a:nth-child(3) { width: 154px; }
.bookmarks a:nth-child(4) { width: 73px; }
.bookmarks a:nth-child(5) { width: 74px; }
.bookmarks a:nth-child(6) { width: 82px; }
.bookmarks a:nth-child(7) { width: 154px; }
.bookmarks a:nth-child(8) { width: 154px; }
.bookmarks a:nth-child(9) { width: 268px; }
.imdb { width: 16px; height: 14px; background: #e6c219; font: bold 8px/14px "Liberation Sans", sans-serif; letter-spacing: -.9px; }
.more { width: 19px; font-size: 15px; color: #666; }

/* Console page, dimmed while loading */
.page { flex: 1; position: relative; font-family: "Liberation Sans", sans-serif; background: linear-gradient(90deg, #fff, #ffffff00 8%, #ffffff00 92%, #fff), linear-gradient(#fff 93.500%, #fafafa 96.500%, #ebebeb); }
.awsbar { height: 23px; background: linear-gradient(#dedede, #d6d6d6); display: flex; align-items: flex-start; padding: 0 42px 0 34px; color: #fff; overflow: hidden; font-size: 14.500px; line-height: 16px; }
.awsbar b { margin-top: -4px; }
.cube { width: 20px; height: 13px; margin-right: 35px; }
.n-aws { width: 46px; }
.n-ser { width: 72px; }
.awsbar .n-edit { width: 37px; color: #ececec; font-weight: 400; }
.c { width: 9px; height: 5px; margin: 3px 28px 0 0; }
.c-edit { opacity: .7; }
.account { margin-left: auto; display: flex; font: 600 12px/16px "Open Sans", "Liberation Sans", sans-serif; }
.account b { font-weight: 600; }
.account i { width: 7px; height: 4px; margin: 2px 21px 0 5px; background: #fff; clip-path: polygon(0 0, 100% 0, 50% 100%); }
.account i:last-child { margin-right: 0; }
.servicebar { height: 43px; display: flex; justify-content: space-between; background: linear-gradient(#fcfcfc, #f9f9f9); border-bottom: 1px solid #f1f1f1; padding: 0 20px; }
.service { width: 168px; border: solid #f2f2f2; border-width: 0 1px; display: flex; align-items: center; padding-left: 15px; gap: 11px; color: #dedede; font-size: 14px; letter-spacing: .03px; }
.service svg { width: 18px; height: 24px; }
.create-new { color: #d8e4f2; font-size: 14px; letter-spacing: .06px; line-height: 44px; padding-right: 15px; border-right: 1px solid #f2f2f2; }
.content { display: flex; padding: 25px 0 0 29px; color: #dcdcdc; font-size: 14px; letter-spacing: .065px; }
.globe { width: 57px; height: 57px; margin-right: 40px; }
.form { width: 816px; }
h1 { margin: 0; height: 46px; border-bottom: 1px solid #f4f4f4; font-weight: 400; font-size: 28px; line-height: 46px; color: #dcdcdc; }
.intro { margin: 7px 0 0; line-height: 21px; white-space: nowrap; }
.intro a, .actions a { color: #d8e4f2; }
.row { display: flex; gap: 20px; }
.row label { width: 160px; text-align: right; font-weight: bold; line-height: 33px; letter-spacing: 0; }
.name { margin-top: 22px; }
.platform { margin-top: 23px; }
.input { width: 210px; height: 31px; border: 1px solid #f4f4f4; border-radius: 4px; padding: 0 6px; line-height: 30px; letter-spacing: .16px; color: #e0e0e0; }
.select { padding: 0 4px 0 8px; display: flex; align-items: center; justify-content: space-between; }
.select svg { width: 6px; height: 12px; }
.hint { margin: 10px 0 0; font-size: 12px; line-height: 18px; letter-spacing: .065px; color: #e3e3e3; white-space: nowrap; }
.platform .hint { margin-top: 7px; }
.code { margin-top: 22px; }
.code > label { line-height: 35px; }
.option { display: flex; align-items: center; gap: 7px; height: 33px; margin-left: -1px; letter-spacing: .15px; }
.radio { width: 14px; height: 14px; border: 1px solid #eee; border-radius: 50%; margin-top: 1px; }
.radio.on { border: 5px solid #dcecfd; }
.hint.sub { margin: 0 0 0 20px; }
.option.second { margin-top: 16px; }
.upload { display: flex; margin: 12px 0 0 20px; font-size: 12px; letter-spacing: .1px; }
.upload > span { margin: 8px 5px 0 9px; }
.btn { height: 32px; border: 1px solid #f1f1f1; border-radius: 4px; background: linear-gradient(#fff, #f9f9f9); font-size: 14px; font-weight: bold; line-height: 33px; text-align: center; letter-spacing: .03px; }
.upload .btn { width: 96px; display: flex; justify-content: center; align-items: center; gap: 4px; padding-top: 1px; }
.upload .btn svg { width: 14px; height: 13px; }
.pencil { width: 12px; height: 12px; margin-top: 10px; }
.actions { margin-top: 21px; border-top: 1px solid #f4f4f4; padding: 20px 20px 0 0; display: flex; justify-content: flex-end; font-weight: bold; line-height: 35px; }
.conf { width: 188px; margin: 0 4px 0 19px; }
.primary { width: 152px; background: #d1e3f1; border-color: #cfe2f2; box-shadow: 0 0 3px #cfe6fb; color: #dbdbdb; border-radius: 3px; }
.loading { position: absolute; left: 445px; top: 281px; display: flex; align-items: center; gap: 15px; font-size: 22px; line-height: 26px; letter-spacing: .15px; color: #444; white-space: nowrap; }
.loading svg { width: 30px; height: 24px; }

/* Dock */
.dock { width: 1160px; height: 39px; margin-left: 60px; flex: none; display: flex; background: linear-gradient(90deg, #6d6c79, #747381 55%, #55555d 85%, #5c5c65); border-radius: 5px 5px 0 0; padding-left: 3px; }
.app { width: 30px; flex: none; position: relative; padding: 5px 2px 0; }
.app svg { width: 26px; height: 26px; font-family: "Liberation Sans", sans-serif; font-weight: bold; }
.app > i { position: absolute; left: 13px; top: 34px; width: 3px; height: 3px; border-radius: 50%; background: #000; }
.app em { position: absolute; left: 15px; top: 4px; width: 14px; height: 10px; border-radius: 6px; background: #f04444; color: #fff; font: 6px/10px Inter, sans-serif; text-align: center; }
.cal { font-size: 13px; font-weight: normal; fill: #222; }
.mon { font-size: 5px; fill: #fff; }
.code-t { font-size: 8px; fill: #fff; }
.ws-t { font-size: 8px; fill: #fff; letter-spacing: -.3px; }
.pp-t { font-size: 12px; fill: #fff; }
.divider { width: 1px; height: 29px; margin: 5px 6px 0 7px; background: #3b3b42; }
```
